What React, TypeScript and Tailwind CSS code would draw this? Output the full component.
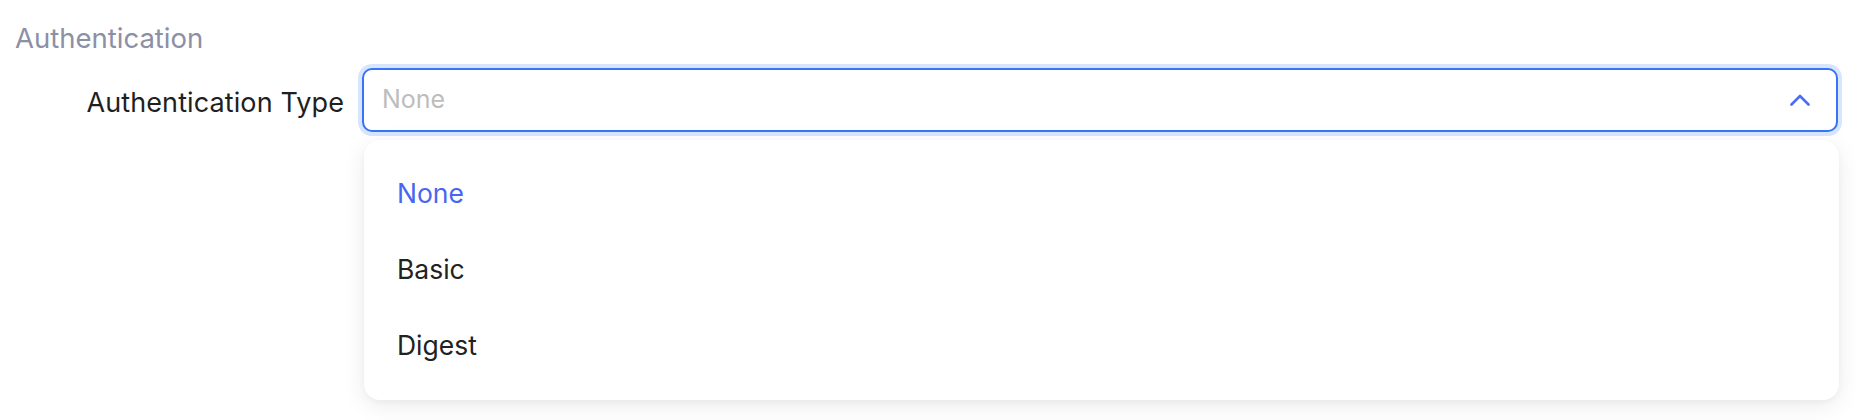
import { useState } from 'react';

const options = ['None', 'Basic', 'Digest'];

function ChevronUp() {
    return (
        <svg width="20" height="12" viewBox="0 0 20 12" fill="none" className="shrink-0">
            <polyline points="1.5,10.5 10,2 18.5,10.5" stroke="#4a6cf6" strokeWidth="2.6" strokeLinecap="round" strokeLinejoin="round" />
        </svg>
    );
}

export default function App() {
    const [value, setValue] = useState('None');

    return (
        <div className="w-[1856px] h-[420px] bg-white font-['Inter',sans-serif] overflow-hidden">
            <div className="pt-[22px] pl-[15px] text-[27.5px] leading-[32px] text-[#8b90a6]">
                Authentication
            </div>

            <div className="flex items-center mt-[14px]">
                <label className="w-[344px] mt-[6px] text-right text-[27px] leading-[32px] text-[#1f1f1f] tracking-[0.1px]">
                    Authentication Type
                </label>

                <div className="relative ml-[18px] w-[1476px]">
                    <div className="h-[64px] flex items-center justify-between pl-[18px] pr-[26px] border-2 border-[#3874f6] rounded-[10px] shadow-[0_0_0_4px_#d8e5fe] bg-white">
                        <span className="text-[25px] text-[#bdbdbd]">{value}</span>
                        <ChevronUp />
                    </div>

                    <ul className="absolute left-[2px] right-[-1px] top-[72px] py-[16px] bg-white rounded-[16px] shadow-[0_6px_24px_rgba(0,0,0,0.08),0_2px_6px_rgba(0,0,0,0.04)]">
                        {options.map((opt) => (
                            <li
                                key={opt}
                                onClick={() => setValue(opt)}
                                className={`h-[76px] flex items-center pl-[33px] text-[26.5px] cursor-pointer ${opt === value ? 'text-[#4866f0]' : 'text-[#222222]'}`}
                            >
                                {opt}
                            </li>
                        ))}
                    </ul>
                </div>
            </div>
        </div>
    );
}
